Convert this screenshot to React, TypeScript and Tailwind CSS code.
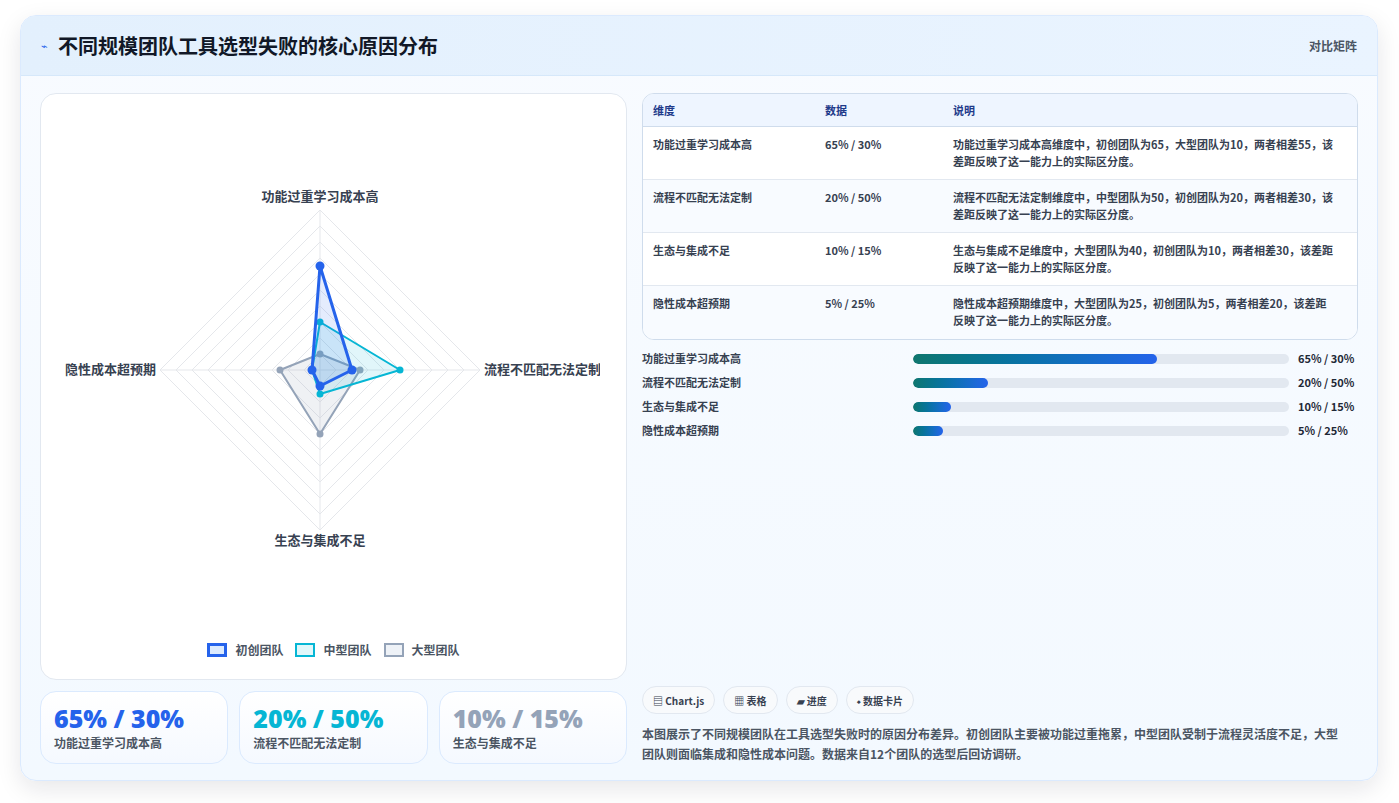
import React from "react";

const axes = ["功能过重学习成本高", "流程不匹配无法定制", "生态与集成不足", "隐性成本超预期"];
const series = [
  { name: "初创团队", data: [65, 20, 10, 5], stroke: "#2563eb", fill: "rgba(37,99,235,0.12)", w: 3, r: 4.5 },
  { name: "中型团队", data: [30, 50, 15, 5], stroke: "#06b6d4", fill: "rgba(6,182,212,0.12)", w: 2, r: 3.5 },
  { name: "大型团队", data: [10, 25, 40, 25], stroke: "#94a3b8", fill: "rgba(148,163,184,0.15)", w: 2, r: 3.5 },
];
const cx = 280, cy = 200, R = 160;
const pt = (i: number, v: number) => {
  const d = (v / 100) * R;
  return [[cx, cy - d], [cx + d, cy], [cx, cy + d], [cx - d, cy]][i];
};

function Radar() {
  const order = [2, 1, 0];
  return (
    <svg width="560" height="400" viewBox="0 0 560 400">
      {Array.from({ length: 10 }, (_, k) => {
        const d = ((k + 1) / 10) * R;
        return <polygon key={k} points={`${cx},${cy - d} ${cx + d},${cy} ${cx},${cy + d} ${cx - d},${cy}`} fill="none" stroke="#e5e7eb" strokeWidth="1" />;
      })}
      <line x1={cx} y1={cy - R} x2={cx} y2={cy + R} stroke="#e5e7eb" />
      <line x1={cx - R} y1={cy} x2={cx + R} y2={cy} stroke="#e5e7eb" />
      {order.map((si) => {
        const s = series[si];
        const pts = s.data.map((v, i) => pt(i, v));
        return (
          <g key={si}>
            <polygon points={pts.map((p) => p.join(",")).join(" ")} fill={s.fill} stroke={s.stroke} strokeWidth={s.w} strokeLinejoin="round" />
            {pts.map((p, i) => <circle key={i} cx={p[0]} cy={p[1]} r={s.r} fill={s.stroke} />)}
          </g>
        );
      })}
      <text x={cx} y={cy - R - 9} textAnchor="middle" fontSize="13" fill="#374151" fontWeight="600">{axes[0]}</text>
      <text x={cx + R + 4} y={cy + 4} textAnchor="start" fontSize="13" fill="#374151" fontWeight="600">{axes[1]}</text>
      <text x={cx} y={cy + R + 15} textAnchor="middle" fontSize="13" fill="#374151" fontWeight="600">{axes[2]}</text>
      <text x={cx - R - 4} y={cy + 4} textAnchor="end" fontSize="13" fill="#374151" fontWeight="600">{axes[3]}</text>
    </svg>
  );
}

const rows = [
  ["功能过重学习成本高", "65% / 30%", "功能过重学习成本高维度中，初创团队为65，大型团队为10，两者相差55，该差距反映了这一能力上的实际区分度。"],
  ["流程不匹配无法定制", "20% / 50%", "流程不匹配无法定制维度中，中型团队为50，初创团队为20，两者相差30，该差距反映了这一能力上的实际区分度。"],
  ["生态与集成不足", "10% / 15%", "生态与集成不足维度中，大型团队为40，初创团队为10，两者相差30，该差距反映了这一能力上的实际区分度。"],
  ["隐性成本超预期", "5% / 25%", "隐性成本超预期维度中，大型团队为25，初创团队为5，两者相差20，该差距反映了这一能力上的实际区分度。"],
];
const bars = [65, 20, 10, 5];

export default function App() {
  return (
    <div className="min-h-screen bg-white p-[15px] pl-[20px] pr-[21px] pb-[22px]" style={{ fontFamily: '"Noto Sans CJK SC", "Noto Sans", sans-serif' }}>
      <div className="h-[766px] rounded-2xl border border-[#dbeafe] bg-gradient-to-b from-[#f8fbff] to-[#f3f9ff] shadow-[0_8px_24px_rgba(15,23,42,0.10)] overflow-hidden flex flex-col">
        <div className="h-[60px] shrink-0 flex items-center justify-between px-[20px] bg-gradient-to-r from-[#e3f0fd] to-[#eaf4ff] border-b border-[#d6e8fa]">
          <div className="flex items-center gap-[10px]">
            <span className="text-[#2563eb] text-[11px]">⌁</span>
            <h1 className="text-[20px] font-bold text-[#111827]">不同规模团队工具选型失败的核心原因分布</h1>
          </div>
          <span className="text-[12px] text-[#4b5563] font-semibold">对比矩阵</span>
        </div>
        <div className="flex-1 flex gap-[15px] px-[19px] pt-[17px] pb-[17px]">
          <div className="w-[587px] flex flex-col gap-[11px]">
            <div className="h-[587px] rounded-2xl bg-white border border-[#e2e8f0] flex flex-col items-center">
              <div className="mt-[76px] ml-[-28px]"><Radar /></div>
              <div className="mt-auto mb-[20px] flex items-center gap-2 text-[12px] text-[#4b5563] font-semibold">
                <span className="w-[20px] h-[14px] border-[3px] border-[#2563eb] bg-[#dbeafe]" />初创团队
                <span className="ml-1 w-[20px] h-[14px] border-2 border-[#06b6d4] bg-[#e0f7fa]" />中型团队
                <span className="ml-1 w-[20px] h-[14px] border-2 border-[#94a3b8] bg-[#eef2f7]" />大型团队
              </div>
            </div>
            <div className="grid grid-cols-3 gap-[11px]">
              {[["65% / 30%", "text-[#2563eb]", axes[0]], ["20% / 50%", "text-[#06b6d4]", axes[1]], ["10% / 15%", "text-[#94a3b8]", axes[2]]].map(([v, c, l]) => (
                <div key={v} className="h-[73px] rounded-2xl border border-[#dbeafe] bg-gradient-to-b from-[#ffffff] to-[#f5f9ff] px-[13px] pt-[10px]">
                  <div className={`text-[25px] leading-[32px] font-extrabold ${c}`} style={{ fontFamily: '"Open Sans", sans-serif' }}>{v}</div>
                  <div className="text-[12px] text-[#4b5563] font-semibold">{l}</div>
                </div>
              ))}
            </div>
          </div>
          <div className="flex-1 flex flex-col">
            <div className="rounded-xl border border-[#cfdcec] bg-white overflow-hidden">
              <div className="h-[33px] flex items-center bg-[#eef5ff] border-b border-[#cfdcec] text-[11px] font-bold text-[#1e3a8a] px-[10px]">
                <div className="w-[172px]">维度</div><div className="w-[128px]">数据</div><div>说明</div>
              </div>
              {rows.map((r, i) => (
                <div key={i} className={`h-[53px] flex items-start pt-[9px] px-[10px] text-[11px] text-[#374151] font-semibold ${i < 3 ? "border-b border-[#e2e8f0]" : ""} ${i % 2 ? "bg-[#f8fbff]" : "bg-white"}`}>
                  <div className="w-[172px]">{r[0]}</div>
                  <div className="w-[128px]">{r[1]}</div>
                  <div className="flex-1 leading-[17px] pr-[14px]">{r[2]}</div>
                </div>
              ))}
            </div>
            <div className="mt-[10px] flex flex-col gap-[7px]">
              {bars.map((b, i) => (
                <div key={i} className="h-[17px] flex items-center text-[11px] font-semibold text-[#374151]">
                  <div className="w-[271px]">{axes[i]}</div>
                  <div className="w-[376px] h-[10px] rounded-full bg-[#e2e8f0] overflow-hidden">
                    <div className="h-full rounded-full bg-gradient-to-r from-[#0f766e] to-[#2563eb]" style={{ width: `${Math.max(b, 8)}%` }} />
                  </div>
                  <div className="ml-[9px] font-bold text-[#1f2937]">{rows[i][1]}</div>
                </div>
              ))}
            </div>
            <div className="mt-auto">
              <div className="flex gap-[8px] text-[10px] font-bold text-[#374151]">
                {["▤ Chart.js", "▦ 表格", "▰ 进度", "⬩ 数据卡片"].map((t) => (
                  <span key={t} className="h-[28px] px-[10px] flex items-center rounded-full border border-[#e2e8f0] bg-[#f8fafc]">{t}</span>
                ))}
              </div>
              <p className="mt-[10px] pr-[14px] text-[12px] leading-[20px] font-semibold text-[#4b5563]">本图展示了不同规模团队在工具选型失败时的原因分布差异。初创团队主要被功能过重拖累，中型团队受制于流程灵活度不足，大型团队则面临集成和隐性成本问题。数据来自12个团队的选型后回访调研。</p>
            </div>
          </div>
        </div>
      </div>
    </div>
  );
}
